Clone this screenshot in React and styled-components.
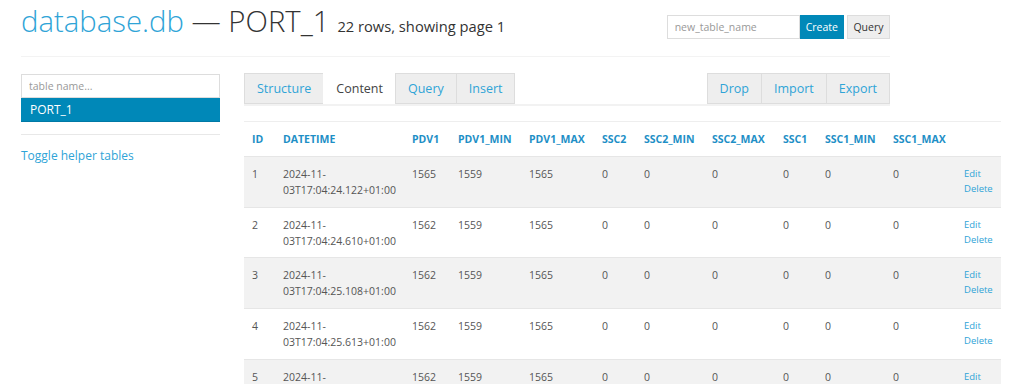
import React from "react";
import styled, { createGlobalStyle } from "styled-components";

const Global = createGlobalStyle`
  html, body { margin: 0; padding: 0; background: #fff; }
  body { font-family: "Open Sans", "Liberation Sans", sans-serif; color: #333; }
  * { box-sizing: border-box; }
`;

const Page = styled.div`
  width: 1024px;
  height: 384px;
  overflow: hidden;
  padding-left: 21px;
`;

const Container = styled.div`
  width: 869px;
`;

const Header = styled.header`
  display: flex;
  align-items: flex-end;
  justify-content: space-between;
  height: 57px;
  border-bottom: 1px solid #f3f3f3;
`;

const Title = styled.h1`
  margin: 0 0 13px 0;
  font-size: 29.3px;
  font-weight: 300;
  line-height: 34px;
  color: #333;
  display: flex;
  align-items: baseline;
  gap: 8px;
  white-space: nowrap;
`;

const DbName = styled.span`
  color: #2fa4d7;
`;

const Sub = styled.small`
  font-size: 14.7px;
  font-weight: 400;
  color: #333;
`;

const TopForm = styled.div`
  display: flex;
  align-items: center;
  align-self: flex-start;
  margin-top: 15px;
`;

const TextInput = styled.input`
  height: 24px;
  width: ${(p) => p.$w}px;
  border: 1px solid #ddd;
  padding: 0 7px;
  font-family: "Open Sans", "Liberation Sans", sans-serif;
  font-size: 10.5px;
  color: #555;
  outline: none;
  &::placeholder { color: #999; }
`;

const SmallBtn = styled.button`
  height: 24px;
  padding: 0 ${(p) => (p.$primary ? 5 : 5.5)}px;
  margin-left: ${(p) => (p.$primary ? 0 : 3)}px;
  border: 1px solid ${(p) => (p.$primary ? "#0088b8" : "#ddd")};
  background: ${(p) => (p.$primary ? "#0088b8" : "#eee")};
  color: ${(p) => (p.$primary ? "#fff" : "#333")};
  font-family: "Open Sans", "Liberation Sans", sans-serif;
  font-size: 10.5px;
`;

const Body = styled.div`
  display: flex;
  gap: 24px;
  padding-top: 16px;
`;

const Sidebar = styled.aside`
  width: 199px;
  flex: none;
`;

const ListItem = styled.div`
  height: 24px;
  background: #0088b8;
  color: #fff;
  font-size: 12px;
  line-height: 24px;
  padding-left: 9px;
  border-bottom: 1px solid #0079a5;
`;

const Divider = styled.div`
  margin-top: 12px;
  border-top: 1px solid #e8e8e8;
`;

const HelperLink = styled.a`
  display: block;
  margin-top: 12px;
  font-size: 12px;
  color: #2fa4d7;
  text-decoration: none;
`;

const Main = styled.main`
  width: 646px;
`;

const TabBar = styled.div`
  display: flex;
  justify-content: space-between;
  border-bottom: 2px solid #f2f2f2;
  height: 33px;
`;

const TabGroup = styled.div`
  display: flex;
`;

const Tab = styled.div`
  height: 31px;
  padding: 0 12px;
  border: 1px solid #ddd;
  margin-left: -1px;
  &:first-child { margin-left: 0; }
  background: ${(p) => (p.$active ? "#fff" : "#eee")};
  border-color: ${(p) => (p.$active ? "#fff" : "#ddd")};
  color: ${(p) => (p.$active ? "#444" : "#2fa4d7")};
  font-size: 12.5px;
  line-height: 29px;
`;

const Table = styled.table`
  margin-top: 15px;
  width: 757px;
  table-layout: fixed;
  border-collapse: collapse;
  font-size: 10.5px;
  border-top: 1px solid #eee;
`;

const Th = styled.th`
  text-align: left;
  color: #1e8fc6;
  font-weight: 700;
  font-size: 10.5px;
  padding: 0 8px;
  height: 35px;
  border-bottom: 1px solid #e6e6e6;
  white-space: nowrap;
`;

const Row = styled.tr`
  background: ${(p) => (p.$odd ? "#f2f2f2" : "#fff")};
  border-bottom: 1px solid #e6e6e6;
`;

const Td = styled.td`
  vertical-align: top;
  padding: 9px 8px 8px 8px;
  line-height: 16px;
  color: #555;
  height: 50.7px;
`;

const ActionLink = styled.a`
  display: block;
  font-size: 9.5px;
  line-height: 15px;
  color: #2fa4d7;
  text-decoration: none;
`;

const widths = [31, 129, 46, 71, 73, 42, 68, 71, 42, 68, 71, 45];
const cols = ["ID", "DATETIME", "PDV1", "PDV1_MIN", "PDV1_MAX", "SSC2", "SSC2_MIN", "SSC2_MAX", "SSC1", "SSC1_MIN", "SSC1_MAX", ""];

const rows = [
  [1, "24.122", 1565],
  [2, "24.610", 1562],
  [3, "25.108", 1562],
  [4, "25.613", 1562],
  [5, "26.110", 1562],
];

export default function App() {
  return (
    <Page>
      <Global />
      <Container>
        <Header>
          <Title>
            <span><DbName>database.db</DbName> — PORT_1</span>
            <Sub>22 rows, showing page 1</Sub>
          </Title>
          <TopForm>
            <TextInput $w={133} placeholder="new_table_name" />
            <SmallBtn $primary>Create</SmallBtn>
            <SmallBtn>Query</SmallBtn>
          </TopForm>
        </Header>
        <Body>
          <Sidebar>
            <TextInput $w={199} placeholder="table name..." />
            <ListItem>PORT_1</ListItem>
            <Divider />
            <HelperLink href="#">Toggle helper tables</HelperLink>
          </Sidebar>
          <Main>
            <TabBar>
              <TabGroup>
                <Tab>Structure</Tab>
                <Tab $active>Content</Tab>
                <Tab>Query</Tab>
                <Tab>Insert</Tab>
              </TabGroup>
              <TabGroup>
                <Tab>Drop</Tab>
                <Tab>Import</Tab>
                <Tab>Export</Tab>
              </TabGroup>
            </TabBar>
            <Table>
              <colgroup>
                {widths.map((w, i) => (
                  <col key={i} style={{ width: w }} />
                ))}
              </colgroup>
              <thead>
                <tr>
                  {cols.map((c, i) => (
                    <Th key={i}>{c}</Th>
                  ))}
                </tr>
              </thead>
              <tbody>
                {rows.map(([id, t, pdv], i) => (
                  <Row key={id} $odd={i % 2 === 0}>
                    <Td>{id}</Td>
                    <Td>2024-11-<br />03T17:04:{t}+01:00</Td>
                    <Td>{pdv}</Td>
                    <Td>1559</Td>
                    <Td>1565</Td>
                    <Td>0</Td>
                    <Td>0</Td>
                    <Td>0</Td>
                    <Td>0</Td>
                    <Td>0</Td>
                    <Td>0</Td>
                    <Td>
                      <ActionLink href="#">Edit</ActionLink>
                      <ActionLink href="#">Delete</ActionLink>
                    </Td>
                  </Row>
                ))}
              </tbody>
            </Table>
          </Main>
        </Body>
      </Container>
    </Page>
  );
}
